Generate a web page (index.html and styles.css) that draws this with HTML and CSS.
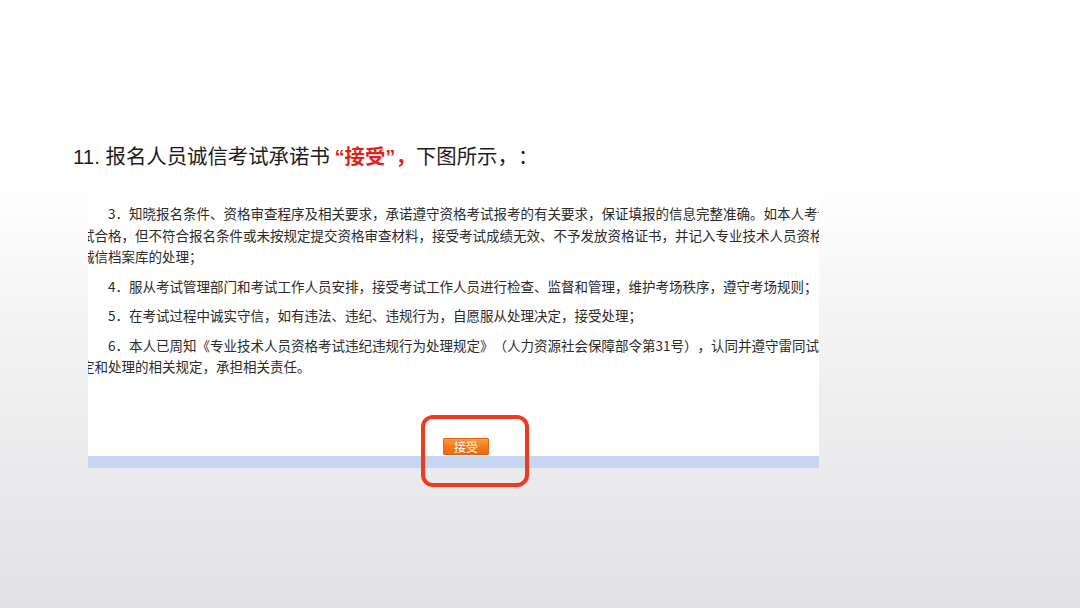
FILE: index.html
```html
<!DOCTYPE html>
<html lang="zh-CN">
<head>
<meta charset="utf-8">
<title>报名人员诚信考试承诺书</title>
<link rel="stylesheet" href="styles.css">
</head>
<body>
<div class="slide">
  <h1 class="title"><span class="latin">11. </span>报名人员诚信考试承诺书 <span class="hl"><span class="latin">“</span>接受<span class="latin">”</span>，</span>下图所示，：</h1>
  <div class="shot">
    <div class="shot-body">
      <div class="doc">
        <p class="para"><span class="line first">3．知晓报名条件、资格审查程序及相关要求，承诺遵守资格考试报考的有关要求，保证填报的信息完整准确。如本人考试</span><span class="line">试合格，但不符合报名条件或未按规定提交资格审查材料，接受考试成绩无效、不予发放资格证书，并记入专业技术人员资格考试</span><span class="line">诚信档案库的处理；</span></p>
        <p class="para"><span class="line first">4．服从考试管理部门和考试工作人员安排，接受考试工作人员进行检查、监督和管理，维护考场秩序，遵守考场规则；</span></p>
        <p class="para"><span class="line first">5．在考试过程中诚实守信，如有违法、违纪、违规行为，自愿服从处理决定，接受处理；</span></p>
        <p class="para"><span class="line first">6．本人已周知《专业技术人员资格考试违纪违规行为处理规定》（人力资源社会保障部令第31号），认同并遵守雷同试卷认</span><span class="line">定和处理的相关规定，承担相关责任。</span></p>
      </div>
      <div class="actions"><button class="accept" type="button">接受</button></div>
    </div>
    <div class="shot-bar"></div>
    <div class="callout"></div>
  </div>
</div>
</body>
</html>
```

FILE: styles.css
```css
html, body {
  margin: 0;
  padding: 0;
}

body {
  width: 1080px;
  height: 608px;
  overflow: hidden;
}

.slide {
  box-sizing: border-box;
  width: 1080px;
  height: 608px;
  padding: 141px 0 0 73px;
  display: flex;
  flex-direction: column;
  background: linear-gradient(180deg, #ffffff 0%, #ffffff 30%, #f4f4f5 52%, #eaeaec 78%, #e2e2e4 100%);
  font-family: "Noto Sans CJK SC", sans-serif;
  text-spacing-trim: space-all;
}

.title {
  margin: 0;
  font-family: "Noto Sans CJK SC", sans-serif;
  font-size: 20.4px;
  line-height: 28px;
  height: 28px;
  font-weight: normal;
  color: #1c1c1c;
  white-space: nowrap;
  text-spacing-trim: space-all;
}

.latin {
  font-family: "Liberation Sans", sans-serif;
}

.hl {
  color: #e3211b;
  font-weight: bold;
}

.shot {
  position: relative;
  width: 731px;
  margin: 26px 0 0 15px;
}

.shot-body {
  box-sizing: border-box;
  height: 261px;
  background: #ffffff;
  overflow: hidden;
  display: flex;
  flex-direction: column;
  padding-top: 8px;
}

.doc {
  margin-left: -7px;
  font-family: "Noto Sans CJK SC", sans-serif;
  font-size: 13.5px;
  line-height: 21.5px;
  color: #2b2b2b;
  text-spacing-trim: space-all;
}

.para {
  margin: 0 0 8px 0;
}

.line {
  display: block;
  white-space: nowrap;
}

.line.first {
  padding-left: 27px;
}

.actions {
  margin-top: auto;
  padding: 0 0 1px 355px;
  display: flex;
}

.accept {
  width: 46px;
  height: 17px;
  padding: 0;
  border: 1px solid #e0650f;
  border-radius: 1px;
  background: linear-gradient(180deg, #fb9a3e 0%, #f47818 55%, #ef6a0c 100%);
  color: #ffffff;
  font-family: "Noto Sans CJK SC", sans-serif;
  font-size: 12px;
  line-height: 15px;
}

.shot-bar {
  height: 12px;
  background: #c6d6f2;
}

.callout {
  position: absolute;
  left: 333px;
  top: 220px;
  box-sizing: border-box;
  width: 108px;
  height: 72px;
  border: 4px solid #f0391d;
  border-radius: 12px;
}
```
